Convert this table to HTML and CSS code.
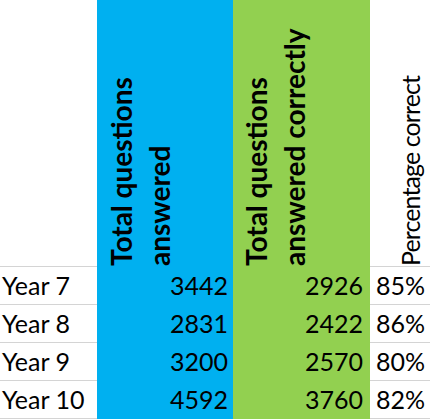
FILE: index.html
```html
<!DOCTYPE html>
<html lang="en">
<head>
    <meta charset="UTF-8">
    <meta name="viewport" content="width=device-width, initial-scale=1.0">
    <title>Questions answered</title>
    <link rel="stylesheet" href="styles.css">
</head>
<body>
    <table class="sheet">
        <colgroup>
            <col class="col-year">
            <col class="col-total">
            <col class="col-correct">
            <col class="col-pct">
        </colgroup>
        <thead>
            <tr>
                <th class="cell-plain"></th>
                <th class="cell-blue head-total"><div class="vtext bold">Total questions answered</div></th>
                <th class="cell-green head-correct"><div class="vtext bold">Total questions answered correctly</div></th>
                <th class="cell-plain head-pct"><div class="vtext">Percentage correct</div></th>
            </tr>
        </thead>
        <tbody>
            <tr>
                <td class="cell-plain year">Year 7</td>
                <td class="cell-blue num">3442</td>
                <td class="cell-green num">2926</td>
                <td class="cell-plain pct">85%</td>
            </tr>
            <tr>
                <td class="cell-plain year">Year 8</td>
                <td class="cell-blue num">2831</td>
                <td class="cell-green num">2422</td>
                <td class="cell-plain pct">86%</td>
            </tr>
            <tr>
                <td class="cell-plain year">Year 9</td>
                <td class="cell-blue num">3200</td>
                <td class="cell-green num">2570</td>
                <td class="cell-plain pct">80%</td>
            </tr>
            <tr>
                <td class="cell-plain year">Year 10</td>
                <td class="cell-blue num">4592</td>
                <td class="cell-green num">3760</td>
                <td class="cell-plain pct">82%</td>
            </tr>
        </tbody>
    </table>
</body>
</html>
```

FILE: styles.css
```css
body {
    margin: 0;
    background: #fff;
    font-family: Lato, "Liberation Sans", sans-serif;
    color: #000;
}

.sheet {
    border-collapse: collapse;
    table-layout: fixed;
    width: 430px;
}

.col-year { width: 97px; }
.col-total { width: 136px; }
.col-correct { width: 137px; }
.col-pct { width: 60px; }

.sheet th,
.sheet td {
    padding: 0;
    border-bottom: 1px solid #d4d4d4;
}

.cell-blue {
    background: #00b0f0;
    border-bottom-color: #00b0f0 !important;
}

.cell-green {
    background: #92d050;
    border-bottom-color: #92d050 !important;
}

/* header: rotated labels reading bottom to top */
.sheet th {
    height: 266px;
    vertical-align: bottom;
    text-align: left;
    font-weight: normal;
}

.vtext {
    writing-mode: vertical-rl;
    transform: rotate(180deg);
    font-size: 25px;
    letter-spacing: -0.9px;
    line-height: 38px;
    height: 261px;
    text-align: start;
}

.vtext.bold {
    font-weight: 700;
    font-size: 28px;
    letter-spacing: 0;
}

.head-total { padding-left: 5px !important; }
.head-correct { padding-left: 4px !important; }
.head-pct { padding-left: 21px !important; }

/* body rows */
.sheet td {
    height: 37px;
    font-size: 25px;
    line-height: 37px;
    vertical-align: bottom;
    white-space: nowrap;
}

.year { padding-left: 2px !important; }
.num { text-align: right; padding-right: 5px !important; }
.cell-green.num { padding-right: 7px !important; }
.pct { padding-left: 6px !important; }
```
